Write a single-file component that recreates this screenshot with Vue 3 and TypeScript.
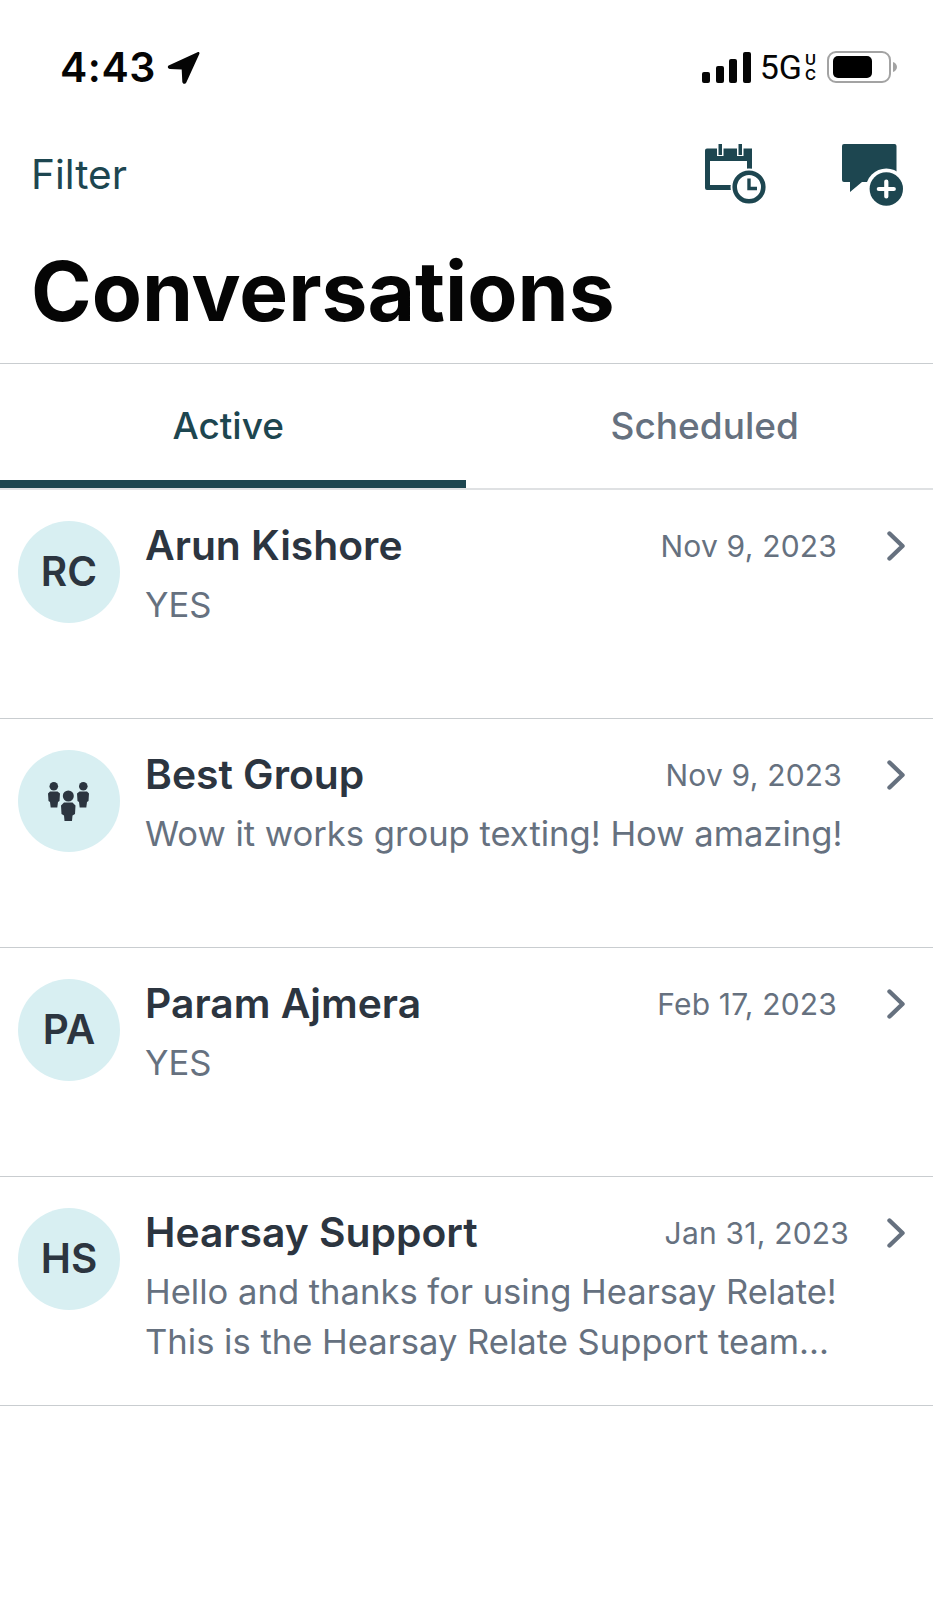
<script setup lang="ts">
interface Conversation {
  name: string
  initials?: string
  date: string
  dateGap: number
  lines: string[]
}

const conversations: Conversation[] = [
  { name: 'Arun Kishore', initials: 'RC', date: 'Nov 9, 2023', dateGap: 48, lines: ['YES'] },
  { name: 'Best Group', date: 'Nov 9, 2023', dateGap: 43, lines: ['Wow it works group texting! How amazing!'] },
  { name: 'Param Ajmera', initials: 'PA', date: 'Feb 17, 2023', dateGap: 48, lines: ['YES'] },
  {
    name: 'Hearsay Support',
    initials: 'HS',
    date: 'Jan 31, 2023',
    dateGap: 36,
    lines: ['Hello and thanks for using Hearsay Relate!', 'This is the Hearsay Relate Support team...'],
  },
]
</script>

<template>
  <div class="screen">
    <div class="status">
      <div class="status-left">
        <span class="time">4:43</span>
        <svg class="arrow" viewBox="0 0 33 33" width="33" height="33">
          <path d="M30.5 1.2 2.2 14.2c-2.2 1-1.6 3.800.8 3.900l11.700.3.600 12.300c.1 2.300 3.100 2.800 4 .7L32.300 3c.6-1.400-.5-2.500-1.800-1.800Z" fill="#050505" />
        </svg>
      </div>
      <div class="status-right">
        <svg class="signal" viewBox="0 0 49 31" width="49" height="31">
          <rect x="0" y="20" width="8" height="11" rx="2" />
          <rect x="14" y="14" width="8" height="17" rx="2" />
          <rect x="27" y="7" width="8" height="24" rx="2" />
          <rect x="41" y="0" width="8" height="31" rx="2" />
        </svg>
        <span class="net">5G</span>
        <span class="uc"><span class="uc-letter">U</span><span class="uc-letter">C</span></span>
        <svg class="battery" viewBox="0 0 70 32" width="70" height="32">
          <rect x="1" y="1" width="62" height="30" rx="8" fill="none" stroke="#a3a3a3" stroke-width="2" />
          <rect x="6" y="5" width="39" height="22" rx="5" fill="#000" />
          <path d="M66 11c2.500.8 4 2.800 4 5s-1.500 4.200-4 5Z" fill="#a3a3a3" />
        </svg>
      </div>
    </div>

    <div class="toolbar">
      <span class="filter">Filter</span>
      <div class="actions">
        <svg viewBox="0 0 62 62" width="62" height="62">
          <path d="M2 4.500h45v25h-5V17H5v24h25v5H2a2 2 0 0 1-2-2V6.500a2 2 0 0 1 2-2Z" fill="#1d4650" />
          <path d="M12 0h6.500v12H12ZM32 0h6.500v12H32Z" fill="#fff" />
          <path d="M13.500 0h3.500v11h-3.500ZM33.500 0h3.500v11h-3.500Z" fill="#1d4650" />
          <circle cx="44" cy="43" r="18.500" fill="#fff" />
          <circle cx="44" cy="43" r="14.300" fill="#fff" stroke="#1d4650" stroke-width="4.600" />
          <path d="M44 34.500v10h8" fill="none" stroke="#1d4650" stroke-width="3.400" />
        </svg>
        <svg viewBox="0 0 62 62" width="62" height="62">
          <path d="M2 0h50.500a2 2 0 0 1 2 2v36H20L8 48V38H2a2 2 0 0 1-2-2V2a2 2 0 0 1 2-2Z" fill="#1d4650" />
          <circle cx="44.300" cy="45" r="20.500" fill="#fff" />
          <circle cx="44.300" cy="45" r="16.700" fill="#1d4650" />
          <path d="M44.300 37.500v15M36.800 45h15" stroke="#fff" stroke-width="4.200" stroke-linecap="round" />
        </svg>
      </div>
    </div>

    <h1 class="title">Conversations</h1>

    <div class="tabs">
      <div class="tab active">Active</div>
      <div class="tab second">Scheduled</div>
    </div>

    <ul class="list">
      <li v-for="c in conversations" :key="c.name" class="row">
        <div class="avatar">
          <span v-if="c.initials" class="initials">{{ c.initials }}</span>
          <svg v-else viewBox="0 0 42 39" width="42" height="39" fill="#2c3540">
            <circle cx="5.800" cy="4.300" r="4.300" />
            <path d="M2 9.500h7.500L12 11.500 11.500 19l-1.500 1-.7 5.500H2.700L2 20 .5 19 0 11.500Z" />
            <circle cx="35.300" cy="4.300" r="4.300" />
            <path d="M31.500 9.500H39l2 2-.5 7.500-1.500 1-.7 5.500h-6.600L31 20l-1.500-1-.5-7.500Z" />
            <circle cx="20.300" cy="14" r="5.500" />
            <path d="M16 20.500h8.500l3 3L27 32l-2.500 1.500-.5 5.500h-7.500l-.5-5.500L13.500 32 13 23.500Z" />
          </svg>
        </div>
        <div class="body">
          <div class="head">
            <span class="name">{{ c.name }}</span>
            <span class="date" :style="{ marginRight: c.dateGap + 'px' }">{{ c.date }}</span>
            <svg class="chev" viewBox="0 0 20 30" width="20" height="30">
              <path d="M4.500 2.500 17.500 15 4.500 27.500" fill="none" stroke="#66717f" stroke-width="4.400" stroke-linecap="round" stroke-linejoin="round" />
            </svg>
          </div>
          <div class="preview">
            <div v-for="l in c.lines" :key="l">{{ l }}</div>
          </div>
        </div>
      </li>
    </ul>
  </div>
</template>

<style>
html, body { margin: 0; background: #fff; }
</style>

<style scoped>
.screen {
  width: 933px;
  height: 1600px;
  background: #fff;
  font-family: Inter, "Liberation Sans", sans-serif;
  overflow: hidden;
}
.status {
  height: 134px;
  box-sizing: border-box;
  padding: 44px 36px 0 60px;
  display: flex;
  justify-content: space-between;
  align-items: flex-start;
}
.status-left { display: flex; align-items: center; gap: 11px; }
.time { font-size: 41px; font-weight: 600; color: #050505; line-height: 47px; letter-spacing: 0.5px; }
.status-right { display: flex; align-items: center; padding-top: 7px; }
.signal { fill: #050505; }
.net { margin-left: 9px; font-size: 34px; line-height: 32px; color: #050505; font-family: Roboto, sans-serif; }
.uc { display: flex; flex-direction: column; margin-left: 2px; color: #050505; font-weight: 600; width: 13px; align-items: center; }
.uc-letter { font-size: 15px; line-height: 15px; height: 15px; }
.battery { margin-left: 10px; }
.toolbar {
  height: 78px;
  padding: 0 29px 0 31px;
  display: flex;
  justify-content: space-between;
  align-items: center;
}
.filter { font-size: 40.6px; color: #1d4650; padding-top: 3px; }
.actions { display: flex; gap: 75px; padding-top: 3px; }
.title {
  margin: 0;
  padding: 10px 0 0 31px;
  height: 152px;
  box-sizing: border-box;
  font-size: 82px;
  line-height: 140px;
  font-weight: 700;
  color: #050505;
  border-bottom: 1px solid #c9cdd0;
}
.tabs { display: flex; height: 126px; box-sizing: border-box; border-bottom: 2px solid #dfe1e3; }
.tab {
  flex: 1;
  display: flex;
  justify-content: center;
  padding-top: 39px;
  font-size: 37px;
  font-weight: 500;
  color: #66717f;
  box-sizing: border-box;
}
.tab.active { color: #1d4650; border-bottom: 8px solid #1d4650; padding-right: 9px; }
.tab.second { padding-left: 11px; }
.list { list-style: none; margin: 0; padding: 0; }
.row {
  height: 229px;
  box-sizing: border-box;
  padding: 31px 28px 0 18px;
  display: flex;
  gap: 25px;
  border-bottom: 1px solid #c9cdd0;
}
.avatar {
  width: 102px;
  height: 102px;
  flex: none;
  border-radius: 50%;
  background: #d8eff2;
  display: flex;
  align-items: center;
  justify-content: center;
  font-size: 40.5px;
  font-weight: 600;
  color: #2c3540;
}
.initials { padding-bottom: 2px; }
.body { flex: 1; min-width: 0; padding-top: 2px; }
.head { display: flex; align-items: center; height: 45px; }
.name { flex: 1; font-size: 40.8px; line-height: 44px; margin-bottom: 2px; font-weight: 600; color: #2c3540; }
.date { font-size: 30px; color: #66717f; letter-spacing: 0.2px; }
.chev { flex: none; }
.preview { margin-top: 11px; font-size: 34.6px; line-height: 50px; color: #66717f; white-space: nowrap; }
</style>
